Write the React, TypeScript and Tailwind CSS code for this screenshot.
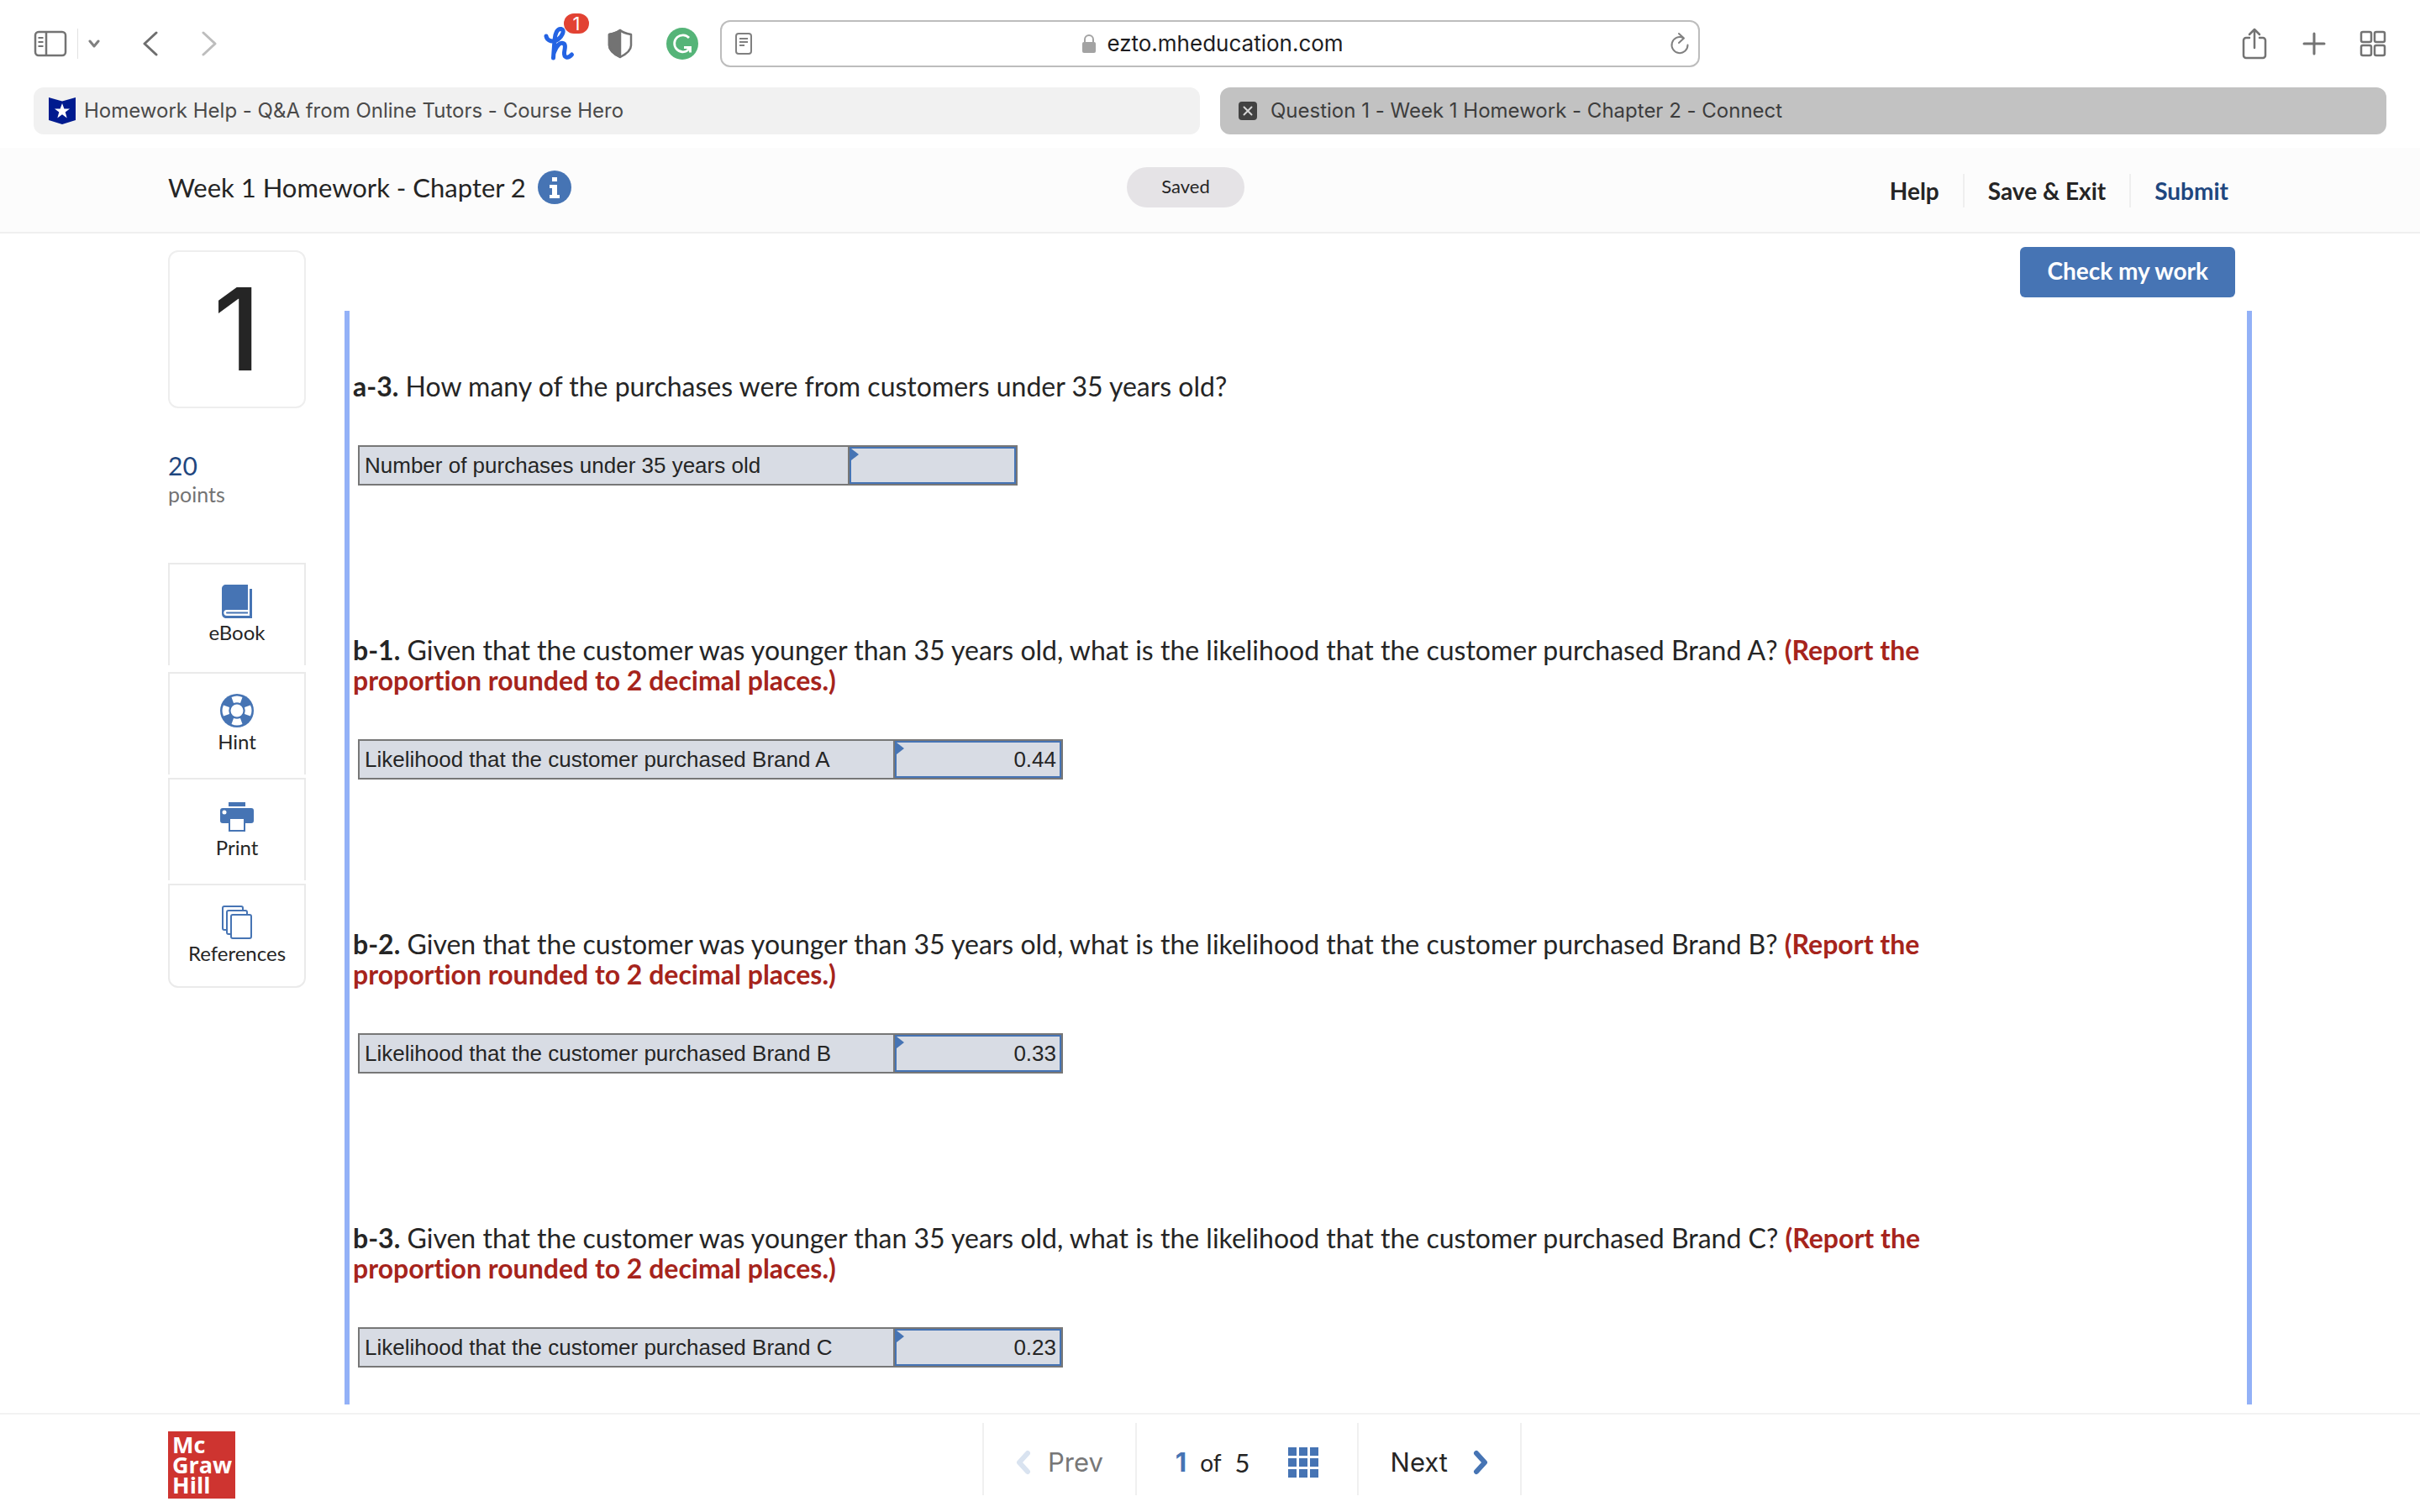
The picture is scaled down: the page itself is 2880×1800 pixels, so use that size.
import React, { useState } from 'react';

type Question = {
  id: string;
  text: string;
  note?: string;
  label: string;
  labelWidth: string;
  value: string;
};

const QUESTIONS: Question[] = [
  {
    id: 'a-3.',
    text: 'How many of the purchases were from customers under 35 years old?',
    label: 'Number of purchases under 35 years old',
    labelWidth: 'w-[583px]',
    value: '',
  },
  {
    id: 'b-1.',
    text: 'Given that the customer was younger than 35 years old, what is the likelihood that the customer purchased Brand A?',
    note: '(Report the proportion rounded to 2 decimal places.)',
    label: 'Likelihood that the customer purchased Brand A',
    labelWidth: 'w-[637px]',
    value: '0.44',
  },
  {
    id: 'b-2.',
    text: 'Given that the customer was younger than 35 years old, what is the likelihood that the customer purchased Brand B?',
    note: '(Report the proportion rounded to 2 decimal places.)',
    label: 'Likelihood that the customer purchased Brand B',
    labelWidth: 'w-[637px]',
    value: '0.33',
  },
  {
    id: 'b-3.',
    text: 'Given that the customer was younger than 35 years old, what is the likelihood that the customer purchased Brand C?',
    note: '(Report the proportion rounded to 2 decimal places.)',
    label: 'Likelihood that the customer purchased Brand C',
    labelWidth: 'w-[637px]',
    value: '0.23',
  },
];

function BrowserToolbar() {
  return (
    <div className="grid h-[104px] grid-cols-[minmax(0,1fr)_minmax(0,1166px)_minmax(0,1fr)] items-center px-10">
      <div className="flex items-center pr-[26px]">
        <button aria-label="Show sidebar">
          <svg width="40" height="32" viewBox="0 0 40 32" fill="none" stroke="#737373" strokeWidth="2.5">
            <rect x="2" y="2" width="36" height="28" rx="4" />
            <path d="M15 2v28" />
            <path d="M5.5 9h6M5.5 14h6M5.5 19h6" strokeWidth="2" />
          </svg>
        </button>
        <span className="ml-3 h-9 w-px bg-[#e2e2e2]" />
        <button aria-label="Tab groups" className="ml-3">
          <svg width="14" height="10" viewBox="0 0 14 10" fill="none" stroke="#808080" strokeWidth="3" strokeLinecap="round" strokeLinejoin="round">
            <path d="M2 2l5 6 5-6" />
          </svg>
        </button>
        <button aria-label="Back" className="ml-[50px]">
          <svg width="20" height="30" viewBox="0 0 20 30" fill="none" stroke="#6e6e6e" strokeWidth="3" strokeLinecap="round" strokeLinejoin="round">
            <path d="M17 2L3 15l14 13" />
          </svg>
        </button>
        <button aria-label="Forward" className="ml-[50px]">
          <svg width="20" height="30" viewBox="0 0 20 30" fill="none" stroke="#bdbdbd" strokeWidth="3" strokeLinecap="round" strokeLinejoin="round">
            <path d="M3 2l14 13L3 28" />
          </svg>
        </button>
        <button aria-label="Honey" className="relative ml-auto">
          <svg width="38" height="42" viewBox="0 0 38 42" fill="none" stroke="#2463e3" strokeWidth="5" strokeLinecap="round" strokeLinejoin="round">
            <path d="M3 12c1 6 9 8 14 4c6-5 8-11 4-12.500c-5-1-7.500 6-8 13L11.500 38" />
            <path d="M12.500 31c3-8 7-11.500 10.500-10.500c4 1 2 7 1.500 11c-.5 6 4 8 9 2.500" />
          </svg>
          <span className="absolute -top-[15px] left-[24px] flex h-6 w-[30px] items-center justify-center rounded-full bg-[#e24233] font-['Inter',sans-serif] text-[22px] leading-none text-white">
            1
          </span>
        </button>
        <button aria-label="Privacy report" className="ml-[38px]">
          <svg width="30" height="36" viewBox="0 0 30 36" fill="none" stroke="#737373" strokeWidth="2.5" strokeLinejoin="round">
            <path d="M15 2C12 5 7 6 2 7v13c0 6 7 11 13 14c6-3 13-8 13-14V7c-5-1-10-2-13-5z" />
            <path d="M15 2C12 5 7 6 2 7v13c0 6 7 11 13 14z" fill="#737373" />
          </svg>
        </button>
        <button aria-label="Grammarly" className="ml-10">
          <svg width="38" height="38" viewBox="0 0 38 38" fill="none" stroke="#fff" strokeWidth="2.8">
            <circle cx="19" cy="19" r="19" fill="#55b478" stroke="none" />
            <path d="M27 12A10 10 0 1 0 26 26.500" />
            <path d="M21 23.500h7.500v6" />
            <path d="M22 23.500h6.500v5z" fill="#fff" stroke="none" />
          </svg>
        </button>
      </div>

      <div className="flex h-14 items-center rounded-xl border-2 border-[#bdbdbd] bg-white pr-2.5 pl-4">
        <svg width="20" height="26" viewBox="0 0 20 26" fill="none" stroke="#808080" strokeWidth="2">
          <rect x="1" y="1" width="18" height="24" rx="3" />
          <path d="M5 7h10M5 11h10M5 15h6" />
        </svg>
        <div className="flex flex-1 items-center justify-center gap-3 pl-1">
          <svg width="18" height="24" viewBox="0 0 18 24" fill="none">
            <rect x="1" y="10" width="16" height="13" rx="2" fill="#a3a3a3" />
            <path d="M4 11V7a5 5 0 0 1 10 0v4" stroke="#a3a3a3" strokeWidth="2" />
          </svg>
          <span className="font-['Inter',sans-serif] text-[26px] leading-8 text-[#1d1d1f]">
            ezto.mheducation.com
          </span>
        </div>
        <button aria-label="Reload">
          <svg width="24" height="28" viewBox="0 0 24 28" fill="none" stroke="#808080" strokeWidth="2" strokeLinecap="round" strokeLinejoin="round">
            <path d="M16 7a9.500 9.500 0 1 0 5.500 8.500" />
            <path d="M11 2l6 5.500-6 5.500" />
          </svg>
        </button>
      </div>

      <div className="flex items-center justify-end text-[#737373]">
        <button aria-label="Share">
          <svg width="30" height="38" viewBox="0 0 30 38" fill="none" stroke="currentColor" strokeWidth="2.5" strokeLinecap="round" strokeLinejoin="round">
            <path d="M9 12H5a3 3 0 0 0-3 3v18a3 3 0 0 0 3 3h20a3 3 0 0 0 3-3V15a3 3 0 0 0-3-3h-4" />
            <path d="M15 24V2M9 8l6-6 6 6" />
          </svg>
        </button>
        <button aria-label="New tab" className="ml-[42px]">
          <svg width="28" height="28" viewBox="0 0 28 28" stroke="currentColor" strokeWidth="3" strokeLinecap="round">
            <path d="M14 2v24M2 14h24" />
          </svg>
        </button>
        <button aria-label="Tab overview" className="ml-10">
          <svg width="32" height="32" viewBox="0 0 32 32" fill="none" stroke="currentColor" strokeWidth="2.5">
            <rect x="2" y="2" width="12" height="12" rx="2" />
            <rect x="18" y="2" width="12" height="12" rx="2" />
            <rect x="2" y="18" width="12" height="12" rx="2" />
            <rect x="18" y="18" width="12" height="12" rx="2" />
          </svg>
        </button>
      </div>
    </div>
  );
}

function BrowserTabs() {
  return (
    <div className="grid grid-cols-2 gap-6 px-10 pb-4 font-['Inter',sans-serif] text-[24px] text-[#4a4a4a]">
      <button className="flex h-14 items-center gap-2.5 rounded-xl bg-[#f1f1f1] px-[18px]">
        <svg width="32" height="32" viewBox="0 0 32 32">
          <path d="M0 0l16 4.500L32 0v27l-16 5-16-5z" fill="#001b8f" />
          <path d="M16 7l2.400 6.500H25l-5.300 4.100 2 6.900-5.700-4.200-5.700 4.200 2-6.900L7 13.500h6.600z" fill="#fff" />
        </svg>
        Homework Help - Q&A from Online Tutors - Course Hero
      </button>
      <button className="flex h-14 items-center gap-4 rounded-xl bg-[#c2c2c2] px-[22px] text-[#3d3d3d]">
        <svg width="22" height="22" viewBox="0 0 22 22">
          <rect width="22" height="22" rx="4" fill="#424242" />
          <path d="M6.500 6.500l9 9M15.500 6.500l-9 9" stroke="#d6d6d6" strokeWidth="2" strokeLinecap="round" />
        </svg>
        Question 1 - Week 1 Homework - Chapter 2 - Connect
      </button>
    </div>
  );
}

function AssignmentHeader() {
  return (
    <header className="grid h-[102px] grid-cols-[1fr_auto_1fr] items-center border-b-2 border-[#efefef] bg-[#fcfcfc] pr-[58px] pb-1.5">
      <div className="flex items-center gap-[14px] pl-[200px]">
        <h1 className="text-[31px] leading-10">Week 1 Homework - Chapter 2</h1>
        <button aria-label="Assignment information">
          <svg width="40" height="40" viewBox="0 0 40 40">
            <circle cx="20" cy="20" r="20" fill="#4674b4" />
            <path d="M17 8h6v5h-6zM14 17h9v12h3v4H14v-4h3v-8h-3z" fill="#fff" />
          </svg>
        </button>
      </div>
      <span className="flex h-12 w-[140px] items-center justify-center rounded-full bg-[#e5e3e6] pb-1 text-[22px]">
        Saved
      </span>
      <nav className="mt-2 flex justify-end pr-[142px] text-[28px] leading-10 font-bold">
        <button className="px-7">Help</button>
        <button className="border-x-2 border-[#efefef] px-7">Save & Exit</button>
        <button className="px-7 text-[#1f477f]">Submit</button>
      </nav>
    </header>
  );
}

function BookIcon() {
  return (
    <svg width="36" height="40" viewBox="0 0 36 40" fill="#4674b4">
      <path d="M5 0h26v30H6c-5 0-5 7 0 7h27V5h3v35H6c-4 0-6-2-6-6V5c0-3 2-5 5-5z" />
      <path d="M6 32.500h25v2H6a1 1 0 0 1 0-2z" />
    </svg>
  );
}

function HintIcon() {
  return (
    <svg width="40" height="40" viewBox="0 0 40 40">
      <circle cx="20" cy="20" r="20" fill="#4674b4" />
      <circle cx="20" cy="20" r="7.5" fill="#fff" />
      <g fill="#fff">
        <path d="M13.500 4Q20 1 26.500 4L24 11Q20 9.500 16 11z" />
        <path d="M13.500 36Q20 39 26.500 36L24 29Q20 30.500 16 29z" />
        <path d="M4 13.500Q1 20 4 26.500L11 24Q9.500 20 11 16z" />
        <path d="M36 13.500Q39 20 36 26.500L29 24Q30.500 20 29 16z" />
      </g>
    </svg>
  );
}

function PrintIcon() {
  return (
    <svg width="40" height="40" viewBox="0 0 40 40" fill="#4674b4">
      <path d="M10 3h20v5H10z" />
      <path fillRule="evenodd" d="M3 10h34a3 3 0 0 1 3 3v12a3 3 0 0 1-3 3h-7v10H10V28H3a3 3 0 0 1-3-3V13a3 3 0 0 1 3-3zM12 23v13h16V23zM5 12.500a2.500 2.500 0 1 0 0 5a2.500 2.500 0 0 0 0-5z" />
    </svg>
  );
}

function ReferencesIcon() {
  return (
    <svg width="36" height="40" viewBox="0 0 36 40" fill="#fff" stroke="#4674b4" strokeWidth="2">
      <rect x="1" y="1" width="24" height="28" rx="2" />
      <rect x="6" y="6" width="24" height="28" rx="2" />
      <rect x="11" y="11" width="24" height="28" rx="2" />
    </svg>
  );
}

function Sidebar() {
  const tool =
    'flex h-[122px] flex-col items-center border-2 border-b-0 border-[#eaeaea] pt-6 text-[24px] leading-[34px]';

  return (
    <aside className="w-[164px] shrink-0 pt-5">
      <div className="flex h-[188px] items-center justify-center rounded-xl border-2 border-[#eeeeee] font-['Inter',sans-serif] text-[136px] leading-none font-medium">
        1
      </div>
      <div className="mt-[50px] text-[30px] leading-9 text-[#1f477f]">20</div>
      <div className="text-[25px] leading-8 text-[#737373]">points</div>
      <div className="mt-[66px] flex flex-col gap-1">
        <button className={`${tool} mb-1`}>
          <BookIcon />
          eBook
        </button>
        <button className={tool}>
          <HintIcon />
          Hint
        </button>
        <button className={tool}>
          <PrintIcon />
          Print
        </button>
        <button className="flex h-[124px] flex-col items-center rounded-b-xl border-2 border-[#eaeaea] pt-6 text-[24px] leading-[34px]">
          <ReferencesIcon />
          References
        </button>
      </div>
    </aside>
  );
}

function QuestionBlock({
  question,
  value,
  onChange,
}: {
  question: Question;
  value: string;
  onChange: (v: string) => void;
}) {
  return (
    <section>
      <p className="max-w-[1980px] text-[32px] leading-9">
        <b>{question.id}</b> {question.text}{' '}
        {question.note ? <b className="text-[#a6241c]">{question.note}</b> : null}
      </p>
      <table className="mt-[52px] ml-1.5 border-collapse bg-[#d8dce4] font-['Liberation_Sans',sans-serif] text-[26px] leading-8">
        <tbody>
          <tr className="h-[46px]">
            <th
              scope="row"
              className={`${question.labelWidth} border-2 border-[#777777] pl-1.5 text-left font-normal`}
            >
              <label htmlFor={question.id}>{question.label}</label>
            </th>
            <td className="border-2 border-[#777777] p-0">
              <div className="relative">
                <input
                  id={question.id}
                  value={value}
                  onChange={(e) => onChange(e.target.value)}
                  className="block h-11 w-[198px] border-2 border-[#4674b4] px-1 text-right outline-none"
                />
                <svg className="absolute top-0.5 left-0.5" width="9" height="14" viewBox="0 0 9 14">
                  <path d="M0 0l9 7-9 7z" fill="#4674b4" />
                </svg>
              </div>
            </td>
          </tr>
        </tbody>
      </table>
    </section>
  );
}

function Footer() {
  return (
    <footer className="grid h-[118px] grid-cols-[1fr_auto_1fr] border-t-2 border-[#f2f2f2] pl-[100px]">
      <div className="pt-5 pl-[100px]">
        <div className="flex h-20 w-20 flex-col justify-center bg-[#ce3430] pl-[5px] font-['Open_Sans',sans-serif] text-[27px] leading-6 font-bold text-white">
          <span>Mc</span>
          <span>Graw</span>
          <span>Hill</span>
        </div>
      </div>
      <nav className="mt-2.5 flex h-[86px] items-center divide-x-2 divide-[#f0f0f0] border-x-2 border-[#f0f0f0] text-[31px]">
        <button className="flex h-full items-center gap-5 px-[38px] pt-2 font-['Inter',sans-serif] text-[#777777]">
          <svg width="18" height="30" viewBox="0 0 18 30" fill="none" stroke="#d9e3f0" strokeWidth="6" strokeLinecap="round" strokeLinejoin="round">
            <path d="M14 4L4 15l10 11" />
          </svg>
          Prev
        </button>
        <div className="flex h-full items-center px-[46px] pt-2">
          <span className="font-['Inter',sans-serif] font-bold text-[#4674b4]">1</span>
          <span className="ml-4 text-[28px]">of</span>
          <span className="ml-4">5</span>
          <button aria-label="Question list" className="ml-[45px]">
            <svg width="36" height="36" viewBox="0 0 36 36" fill="#4674b4">
              <path d="M0 0h10v10H0zM13 0h10v10H13zM26 0h10v10H26zM0 13h10v10H0zM13 13h10v10H13zM26 13h10v10H26zM0 26h10v10H0zM13 26h10v10H13zM26 26h10v10H26z" />
            </svg>
          </button>
        </div>
        <button className="flex h-full items-center gap-[30px] px-[38px] pt-2 font-['Inter',sans-serif]">
          Next
          <svg width="18" height="30" viewBox="0 0 18 30" fill="none" stroke="#4674b4" strokeWidth="6" strokeLinecap="round" strokeLinejoin="round">
            <path d="M4 4l10 11L4 26" />
          </svg>
        </button>
      </nav>
    </footer>
  );
}

export default function App() {
  const [answers, setAnswers] = useState(QUESTIONS.map((q) => q.value));

  function setAnswer(index: number, value: string) {
    setAnswers((a) => a.map((old, i) => (i === index ? value : old)));
  }

  return (
    <div className="flex min-h-screen flex-col bg-white font-['Lato',sans-serif] text-[#252525] [font-variant-ligatures:none]">
      <BrowserToolbar />
      <BrowserTabs />
      <AssignmentHeader />
      <main className="flex flex-1 gap-[46px] px-[200px] pb-2.5">
        <Sidebar />
        <div className="flex flex-1 flex-col pt-4">
          <button className="mr-5 h-[60px] self-end rounded-md bg-[#4674b4] px-8 pb-1 text-[28px] font-bold text-white">
            Check my work
          </button>
          <div className="mt-4 flex flex-1 flex-col gap-[178px] border-x-[6px] border-[#93b1f7] pt-[72px] pb-11 pl-1">
            {QUESTIONS.map((q, i) => (
              <QuestionBlock key={q.id} question={q} value={answers[i]} onChange={(v) => setAnswer(i, v)} />
            ))}
          </div>
        </div>
      </main>
      <Footer />
    </div>
  );
}
